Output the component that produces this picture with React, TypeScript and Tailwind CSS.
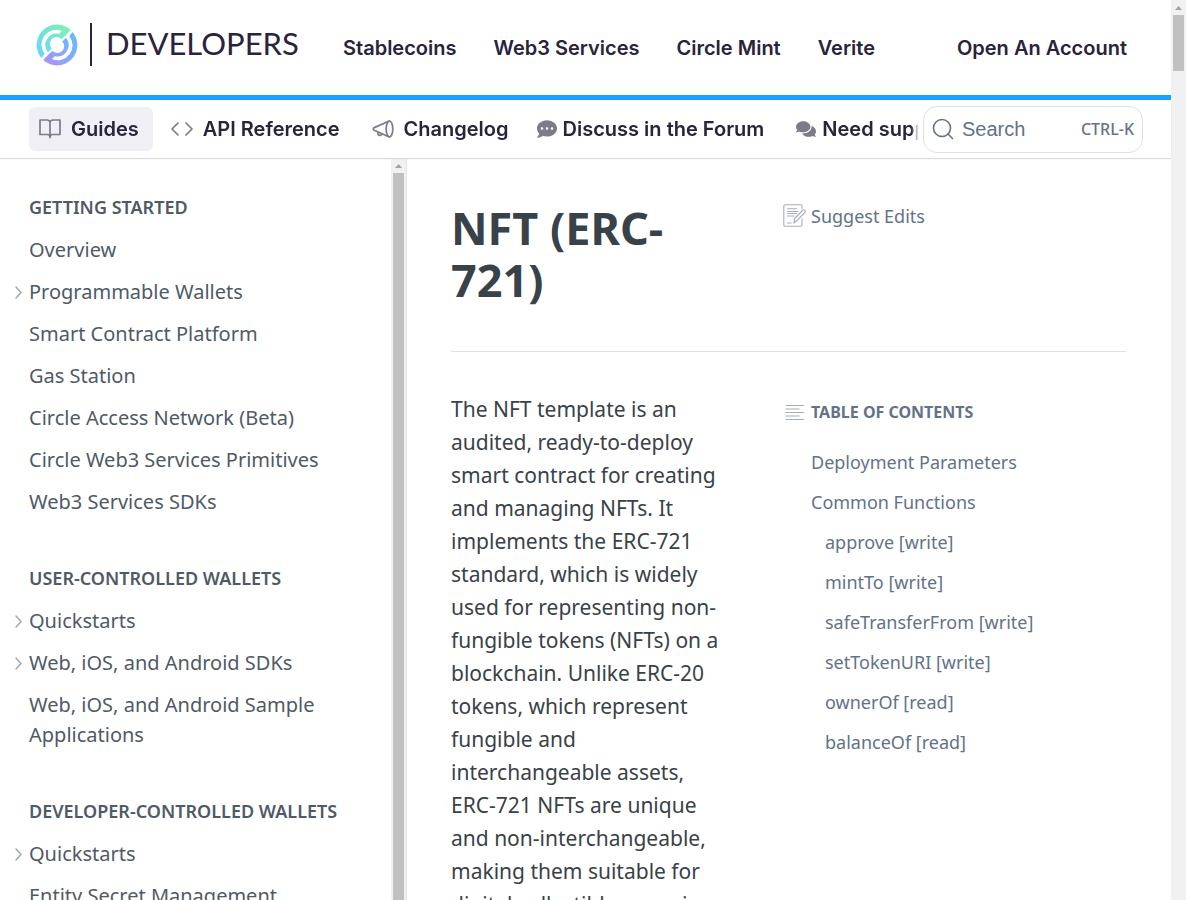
import React from "react";
import { FaCommentDots, FaComments } from "react-icons/fa";

type Item = { label: string; nested?: boolean };
type Section = { title: string; items: Item[] };

const sections: Section[] = [
  {
    title: "GETTING STARTED",
    items: [
      { label: "Overview" },
      { label: "Programmable Wallets", nested: true },
      { label: "Smart Contract Platform" },
      { label: "Gas Station" },
      { label: "Circle Access Network (Beta)" },
      { label: "Circle Web3 Services Primitives" },
      { label: "Web3 Services SDKs" },
    ],
  },
  {
    title: "USER-CONTROLLED WALLETS",
    items: [
      { label: "Quickstarts", nested: true },
      { label: "Web, iOS, and Android SDKs", nested: true },
      { label: "Web, iOS, and Android Sample Applications" },
    ],
  },
  {
    title: "DEVELOPER-CONTROLLED WALLETS",
    items: [{ label: "Quickstarts", nested: true }, { label: "Entity Secret Management" }],
  },
];

const toc: Item[] = [
  { label: "Deployment Parameters" },
  { label: "Common Functions" },
  { label: "approve [write]", nested: true },
  { label: "mintTo [write]", nested: true },
  { label: "safeTransferFrom [write]", nested: true },
  { label: "setTokenURI [write]", nested: true },
  { label: "ownerOf [read]", nested: true },
  { label: "balanceOf [read]", nested: true },
];

const logoHalf =
  "M-15.6 13 A20.3 20.3 0 0 1 13.8 -14.9 L7.4 -8.3 Q6 -7 4.2 -6 A6.3 6.3 0 0 0 -5.2 3.6 L-9 7.2 A11.4 11.4 0 0 1 2.2 -11.2 L5 -14 A14.8 14.8 0 0 0 -12.2 9 Z";

function Logo() {
  return (
    <a href="#home" aria-label="Circle Developers" className="flex items-center text-[#29233b]">
      <svg width="42" height="42" viewBox="-21 -21 42 42" aria-hidden="true">
        <defs>
          <linearGradient id="mint" gradientUnits="userSpaceOnUse" x1="-18" y1="10" x2="14" y2="-15">
            <stop offset="0" stopColor="#68d7fa" />
            <stop offset="1" stopColor="#7ef1b3" />
          </linearGradient>
          <linearGradient id="violet" gradientUnits="userSpaceOnUse" x1="14" y1="-16" x2="-14" y2="6">
            <stop offset="0" stopColor="#b090f5" />
            <stop offset="1" stopColor="#68b9ff" />
          </linearGradient>
        </defs>
        <path d={logoHalf} fill="url(#mint)" />
        <path d={logoHalf} transform="rotate(180)" fill="url(#violet)" />
      </svg>
      <span className="ml-3 h-[43px] w-0.5 bg-[#29233b]" />
      <span className="ml-3.5 w-[197px] whitespace-nowrap pb-1 font-['Lato',sans-serif] text-[31px] leading-10">DEVELOPERS</span>
    </a>
  );
}

function BookIcon() {
  return (
    <svg width="22" height="20" viewBox="0 0 22 20" fill="none" stroke="currentColor" strokeWidth="1.7" strokeLinejoin="round" strokeLinecap="round" aria-hidden="true">
      <path d="M11 3.5C11 2 9.5 1 8 1H1v14.500h7.500c1.500 0 2.500 1 2.500 3M11 3.500C11 2 12.500 1 14 1h7v14.500h-7.500c-1.500 0-2.500 1-2.500 3M11 3.500v15" />
    </svg>
  );
}

function CodeIcon() {
  return (
    <svg width="22" height="20" viewBox="0 0 22 20" fill="none" stroke="currentColor" strokeWidth="1.7" strokeLinecap="round" strokeLinejoin="round" aria-hidden="true">
      <path d="M7 4L1 10l6 6M15 4l6 6-6 6" />
    </svg>
  );
}

function MegaphoneIcon() {
  return (
    <svg width="22" height="20" viewBox="0 0 22 20" fill="none" stroke="currentColor" strokeWidth="1.7" strokeLinecap="round" strokeLinejoin="round" aria-hidden="true">
      <ellipse cx="17.5" cy="10" rx="3.3" ry="8" />
      <path d="M17.300 2L2.300 8.600c-1.400.7-1.400 2 0 2.700L17.300 18M6 13.200v1.800c0 1.200 1.500 1.800 2.500 1.200l1.500-1" />
    </svg>
  );
}

function EditIcon() {
  return (
    <svg width="24" height="24" viewBox="0 0 24 24" fill="none" stroke="currentColor" strokeWidth="1.1" strokeLinejoin="round" strokeLinecap="round" aria-hidden="true">
      <path d="M19 4.500V2.200c0-.9-.4-1.400-1.300-1.400H2.200C1.200.8.8 1.300.8 2.200v18.700c0 .9.4 1.400 1.400 1.400h15.500c.9 0 1.300-.5 1.300-1.400V14.500M4.500 4.800h9M4.500 7.500h10.500M4.500 9.500h9M4.500 12h6.500M4.500 19h3.500M10.800 19l.8-4.500 8.400-8.500c.8-.8 3 1.200 2.200 2l-8.500 8.800-2.900 2.200z" />
    </svg>
  );
}

function Arrow() {
  return (
    <svg width="9" height="14" viewBox="0 0 9 14" fill="none" stroke="#a3a8ae" strokeWidth="1.5" strokeLinecap="round" strokeLinejoin="round" aria-hidden="true">
      <path d="M2 2L7 7.500l-5 5.500" />
    </svg>
  );
}

function ScrollBar({ thumb }: { thumb: string }) {
  return (
    <div aria-hidden="true" className="flex w-[15px] shrink-0 flex-col items-center bg-[#f1f1f1]">
      <svg width="15" height="15" viewBox="0 0 15 15" className="shrink-0">
        <path d="M4 10h7L7.500 6z" fill="#a3a3a3" />
      </svg>
      <div className={`w-[11px] shrink-0 bg-[#c1c1c1] ${thumb}`} />
    </div>
  );
}

export default function App() {
  return (
    <div className="flex h-screen overflow-hidden bg-white font-['Noto_Sans',sans-serif]">
      <div className="flex min-w-0 flex-1 flex-col">
        <header className="z-10 shrink-0 font-['Inter',sans-serif] text-[#29233b]">
          <div className="flex h-[100px] items-center justify-between border-b-[5px] border-[#1ba1ff] pl-9 pr-11 pb-1.5">
            <div className="flex items-center gap-10">
              <Logo />
              <nav aria-label="Products" className="flex gap-[37px] pt-1.5 text-xl font-semibold leading-6 whitespace-nowrap">
                <a href="#stablecoins">Stablecoins</a>
                <a href="#web3">Web3 Services</a>
                <a href="#mint">Circle Mint</a>
                <a href="#verite">Verite</a>
              </nav>
            </div>
            <a href="#account" className="pt-1.5 text-xl font-semibold leading-6 whitespace-nowrap">Open An Account</a>
          </div>
          <div className="flex h-[58px] items-center justify-between pl-[29px] pr-7 shadow-[0_1px_1px_#dcdce0]">
            <nav
              aria-label="Documentation"
              className="mr-1 flex min-w-0 flex-1 gap-2 overflow-hidden text-xl font-semibold leading-6 whitespace-nowrap [mask-image:linear-gradient(to_right,black_calc(100%-8px),transparent)]"
            >
              <a href="#guides" aria-current="page" className="flex h-11 items-center gap-2.5 rounded-md bg-[#f0eff5] pl-2.5 pr-3.5">
                <span className="text-[#7f798c]"><BookIcon /></span>Guides
              </a>
              <a href="#api" className="flex h-11 items-center gap-2.5 pl-2.5 pr-3.5">
                <span className="text-[#7f798c]"><CodeIcon /></span>API Reference
              </a>
              <a href="#changelog" className="flex h-11 items-center gap-2.5 pl-2.5 pr-3.5">
                <span className="text-[#7f798c]"><MegaphoneIcon /></span>Changelog
              </a>
              <a href="#forum" className="flex h-11 items-center gap-1.5 pl-1.5 pr-4">
                <FaCommentDots className="size-5 text-[#7f798c]" />Discuss in the Forum
              </a>
              <a href="#support" className="flex h-11 items-center gap-1.5 pl-2 pr-4">
                <FaComments className="size-5 text-[#7f798c]" />Need support?
              </a>
            </nav>
            <button type="button" className="flex h-[47px] w-[220px] shrink-0 items-center rounded-[14px] border border-[#e0e0e2] px-2 text-[#637288]">
              <svg width="22" height="22" viewBox="0 0 22 22" fill="none" stroke="currentColor" strokeWidth="1.6" strokeLinecap="round" aria-hidden="true">
                <circle cx="10" cy="10" r="8.5" />
                <path d="M16 16l4.500 4.500" />
              </svg>
              <span className="ml-2 font-['Liberation_Sans',sans-serif] text-xl">Search</span>
              <span className="ml-auto font-['Noto_Sans',sans-serif] text-base font-medium">CTRL-K</span>
            </button>
          </div>
        </header>

        <div className="flex min-h-0 flex-1">
          <aside className="flex w-[407px] shrink-0 border-r border-[#e4e4e6]">
            <nav aria-label="Guides" className="min-w-0 flex-1 overflow-hidden pl-[29px] pr-10 pt-[37px] text-[#4f5a66]">
              {sections.map((s) => (
                <section key={s.title} className="mb-[49px]">
                  <h2 className="mb-4 whitespace-nowrap text-lg font-semibold leading-6">{s.title}</h2>
                  <ul className="flex flex-col gap-3">
                    {s.items.map((i) => (
                      <li key={i.label} className="relative text-xl leading-[30px]">
                        {i.nested && <span className="absolute top-2 -left-[15px]"><Arrow /></span>}
                        <a href="#doc">{i.label}</a>
                      </li>
                    ))}
                  </ul>
                </section>
              ))}
            </nav>
            <ScrollBar thumb="flex-1" />
          </aside>

          <main className="min-w-0 flex-1 overflow-hidden pl-11 pr-[45px] text-[#384248]">
            <div className="flex border-b border-[#dfe1e3] pt-11 pb-[45px]">
              <h1 className="w-[275px] shrink-0 text-[45px] font-bold leading-[52px]">NFT (ERC-721)</h1>
              <a href="#edit" className="ml-[57px] mt-0.5 flex h-6 items-center gap-1 text-lg leading-6 text-[#637288]">
                <span className="text-[#a3aebd]"><EditIcon /></span>Suggest Edits
              </a>
            </div>
            <div className="flex">
              <p className="w-[275px] shrink-0 pt-[41px] text-[21px] leading-[33px]">
                The NFT template is an audited, ready-to-deploy smart contract for creating and managing NFTs. It implements the ERC-721 standard, which is widely used for representing non-fungible tokens (NFTs) on a blockchain. Unlike ERC-20 tokens, which represent fungible and interchangeable assets, ERC-721 NFTs are unique and non-interchangeable, making them suitable for digital collectibles, gaming assets, and more.
              </p>
              <nav aria-label="Table of contents" className="ml-[57px] pt-12 text-[#637288]">
                <h2 className="flex items-center gap-1.5 text-base font-bold leading-6">
                  <svg width="22" height="20" viewBox="0 0 22 20" stroke="#a3aebd" strokeWidth="1.1" aria-hidden="true">
                    <path d="M2.500 3.500h18.500M2.500 7h14M2.500 10.500h18.500M2.500 14h14M2.500 17.500h18.500" />
                  </svg>
                  TABLE OF CONTENTS
                </h2>
                <ul className="mt-[26px] flex flex-col gap-4 pl-7 text-lg leading-6">
                  {toc.map((t) => (
                    <li key={t.label} className={t.nested ? "pl-3.5" : ""}>
                      <a href="#section">{t.label}</a>
                    </li>
                  ))}
                </ul>
              </nav>
            </div>
          </main>
        </div>
      </div>
      <ScrollBar thumb="h-14" />
    </div>
  );
}
